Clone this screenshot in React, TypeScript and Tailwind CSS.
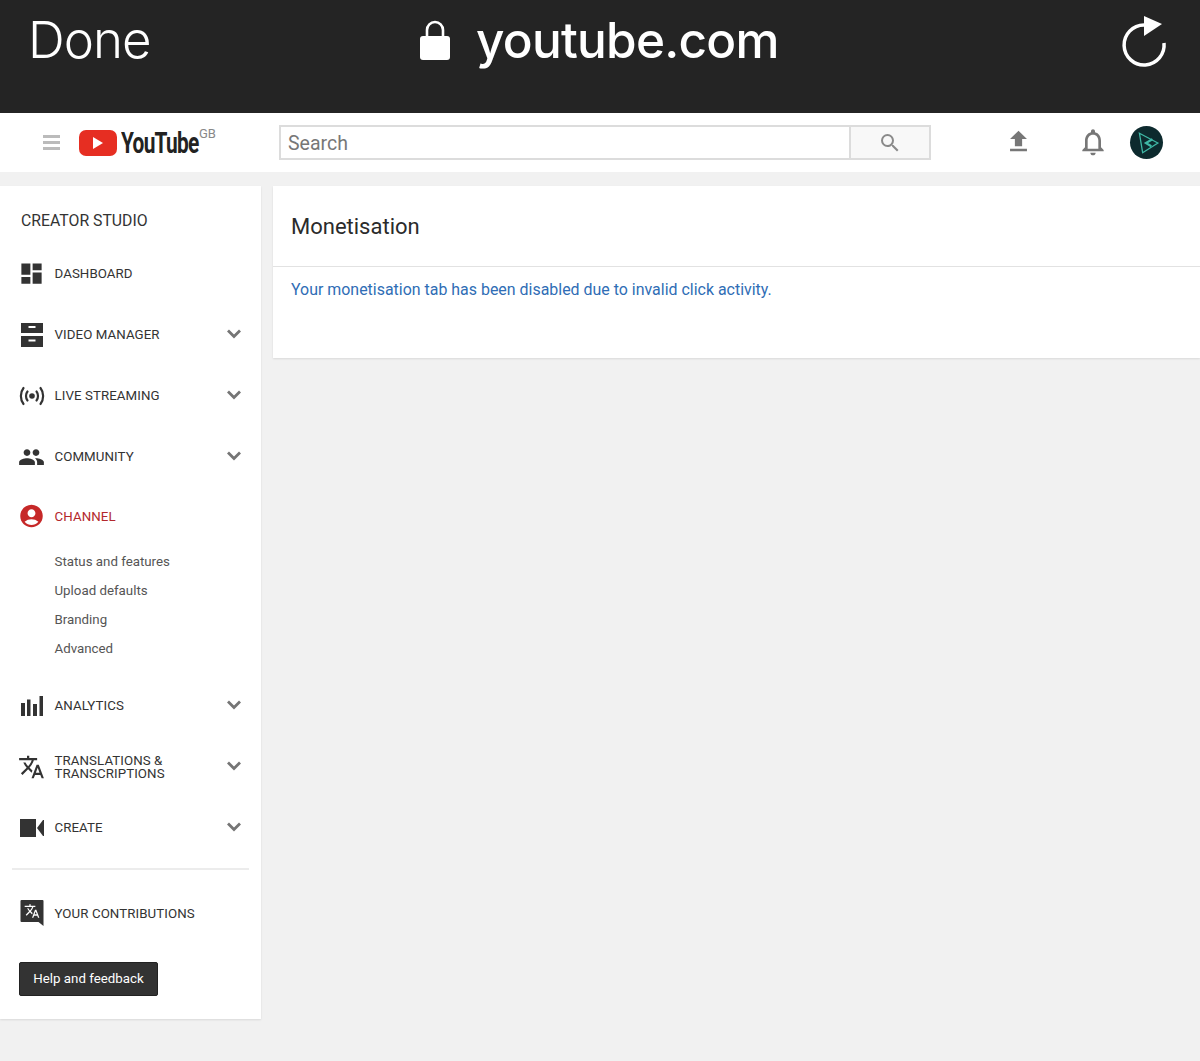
import { MdDashboard, MdPeople, MdAccountCircle, MdTranslate, MdSearch, MdFileUpload, MdNotificationsNone } from "react-icons/md";
import type { ReactNode } from "react";

function VideoManagerIcon() {
  return (
    <svg viewBox="0 0 22 24" className="w-[22px] h-[24px]" fill="#333">
      <path fillRule="evenodd" d="M0 0h22v10H0zM7.500 3v2h7V3zM0 13h22v11H0zM7.500 16.500v2h7v-2z" />
    </svg>
  );
}

function LiveIcon() {
  return (
    <svg viewBox="0 0 26 20" className="w-[26px] h-[20px]" fill="none" stroke="#333" strokeWidth="2.200" strokeLinecap="round">
      <circle cx="13" cy="10" r="2.800" fill="#333" stroke="none" />
      <path d="M8.500 5.500C6.500 8 6.500 12 8.500 14.500M17.500 5.500c2 2.500 2 6.500 0 9M4.500 2C1 6.500 1 13.500 4.500 18M21.500 2c3.500 4.500 3.500 11.500 0 16" />
    </svg>
  );
}

function AnalyticsIcon() {
  return (
    <svg viewBox="0 0 23 20" className="w-[23px] h-[20px]" fill="#333">
      <path d="M1 7h4v13H1zM7 3.500h3.500V20H7zM13 8h4v12h-4zM19.500 0H23v20h-3.500z" />
    </svg>
  );
}

function CameraIcon() {
  return (
    <svg viewBox="0 0 24 18" className="w-[24px] h-[18px]" fill="#333">
      <path d="M0 0h16v18H0zM17 9l6-8h1v16h-1z" />
    </svg>
  );
}

function ContributionsIcon() {
  return (
    <div className="relative w-[24px] h-[26px]">
      <svg viewBox="0 0 24 26" className="w-[24px] h-[26px]" fill="#333">
        <path d="M1.500 0h21a1 1 0 0 1 1 1v25l-5-4H1.500a1 1 0 0 1-1-1V1a1 1 0 0 1 1-1z" />
      </svg>
      <MdTranslate className="absolute left-[4px] top-[3px] w-[16px] h-[16px] text-white" />
    </div>
  );
}

function Chevron() {
  return (
    <svg viewBox="0 0 14 10" className="w-[14px] h-[10px] mb-[2px]" fill="none" stroke="#757575" strokeWidth="2.800">
      <path d="M1 1.500l6 6 6-6" />
    </svg>
  );
}

type NavItem = {
  label: ReactNode;
  icon: ReactNode;
  arrow?: boolean;
};

const topItems: NavItem[] = [
  { label: "DASHBOARD", icon: <MdDashboard className="w-[29px] h-[29px] text-[#333]" /> },
  { label: "VIDEO MANAGER", icon: <VideoManagerIcon />, arrow: true },
  { label: "LIVE STREAMING", icon: <LiveIcon />, arrow: true },
  { label: "COMMUNITY", icon: <MdPeople className="w-[28px] h-[28px] text-[#333]" />, arrow: true },
];

const bottomItems: NavItem[] = [
  { label: "ANALYTICS", icon: <AnalyticsIcon />, arrow: true },
  {
    label: (
      <>
        TRANSLATIONS &amp;
        <br />
        TRANSCRIPTIONS
      </>
    ),
    icon: <MdTranslate className="w-[28px] h-[28px] text-[#333]" />,
    arrow: true,
  },
  { label: "CREATE", icon: <CameraIcon />, arrow: true },
];

const channelLinks = ["Status and features", "Upload defaults", "Branding", "Advanced"];

function NavRow({ item }: { item: NavItem }) {
  return (
    <div className="h-[61px] flex items-center pl-[18px] pr-[20px]">
      <div className="w-[27px] flex justify-center">{item.icon}</div>
      <div className="ml-[9.500px] pt-[2px] flex-1 text-[13.300px] leading-[12.500px] tracking-[0.07px] text-[#333]">{item.label}</div>
      {item.arrow && <Chevron />}
    </div>
  );
}

export default function App() {
  return (
    <div className="w-[1200px] h-[1061px] overflow-hidden bg-[#f1f1f1] font-['Roboto',sans-serif]">
      {/* Browser bar */}
      <div className="h-[113px] bg-[#242424] flex items-start pl-[28px] pr-[33px] pt-[9px] text-white">
        <span className="w-[392px] text-[51px] leading-[62px] font-['Inter',sans-serif] font-light tracking-[-1px]">Done</span>
        <svg viewBox="0 0 30 40" className="w-[30px] h-[40px] mt-[11px]" fill="none">
          <path d="M7 18v-8a8 8 0 0 1 16 0v8" stroke="#fff" strokeWidth="2.600" />
          <rect x="0" y="16" width="30" height="24" rx="3" fill="#fff" />
        </svg>
        <span className="ml-[26px] text-[49.500px] leading-[62px] font-medium font-['Inter',sans-serif] tracking-[-0.75px]">youtube.com</span>
        <svg viewBox="0 0 46 54" className="ml-auto w-[46px] h-[54px] mt-[6px]" fill="none" stroke="#fff" strokeWidth="3.500">
          <path d="M23 10A20 20 0 1 0 43 28" />
          <path d="M23 1l18 8-18 12z" fill="#fff" stroke="none" />
        </svg>
      </div>

      {/* YouTube header */}
      <div className="h-[59px] bg-white flex items-center relative">
        <div className="ml-[43px] w-[17px] flex flex-col gap-[3px]">
          <div className="h-[3px] bg-[#bbb]" />
          <div className="h-[3px] bg-[#bbb]" />
          <div className="h-[3px] bg-[#bbb]" />
        </div>
        <div className="ml-[19px] w-[38px] h-[26px] bg-[#e62e22] rounded-[7px] flex items-center justify-center">
          <div className="w-0 h-0 border-y-[6px] border-y-transparent border-l-[10px] border-l-white" />
        </div>
        <div className="w-[80px] ml-[4px]">
          <span className="block origin-left scale-x-[0.695] text-[30px] leading-[30px] font-bold tracking-[-1px] text-[#222] whitespace-nowrap">
            YouTube
          </span>
        </div>
        <span className="absolute left-[199px] top-[14px] text-[13px] leading-[14px] text-[#888]">GB</span>
        <div className="ml-[78px] w-[652px] h-[35px] flex">
          <div className="flex-1 border-2 border-[#dcdcdc] pl-[7px] pt-[2px] flex items-center text-[19.500px] text-[#777]">Search</div>
          <div className="w-[80px] border-2 border-l-0 border-[#dcdcdc] bg-[#f8f8f8] flex items-center justify-center">
            <MdSearch className="w-[24px] h-[24px] text-[#8a8a8a]" />
          </div>
        </div>
        <MdFileUpload className="absolute left-[1004px] top-[14px] w-[29px] h-[29px] text-[#777]" />
        <MdNotificationsNone className="absolute left-[1077px] top-[13px] w-[32px] h-[32px] text-[#777]" />
        <div className="absolute left-[1130px] top-[13px] w-[33px] h-[33px] rounded-full bg-[#0d2a2e] flex items-center justify-center">
          <svg viewBox="0 0 24 24" className="w-[26px] h-[26px]" fill="none" stroke="#3fb8a6" strokeWidth="1.200">
            <path d="M5 3l17 9-14 9z" />
            <path d="M17 8.500l-6 3.500 5 3" strokeWidth="2" />
          </svg>
        </div>
      </div>

      {/* Body */}
      <div className="mt-[14px] flex items-start gap-[12px]">
        <aside className="w-[261px] h-[833px] bg-white shadow-[0_1px_2px_rgba(0,0,0,0.1)]">
          <div className="pl-[21px] pt-[25px] text-[15.800px] leading-[20px] text-[#333]">CREATOR STUDIO</div>
          <div className="mt-[12px]">
            {topItems.map((item, i) => (
              <NavRow key={i} item={item} />
            ))}
          </div>
          <div className="h-[58px] flex items-center pl-[18px]">
            <div className="w-[27px] flex justify-center">
              <MdAccountCircle className="w-[30px] h-[30px] text-[#c62828]" />
            </div>
            <div className="ml-[9.500px] pt-[2px] text-[13.300px] tracking-[0.07px] text-[#b3282d]">CHANNEL</div>
          </div>
          <div className="pl-[54.500px] pt-[2px] pb-[12px]">
            {channelLinks.map((l) => (
              <div key={l} className="h-[29px] flex items-center text-[13.300px] text-[#555]">
                {l}
              </div>
            ))}
          </div>
          {bottomItems.map((item, i) => (
            <NavRow key={i} item={item} />
          ))}
          <div className="mx-[12px] mt-[10px] border-t-2 border-[#ececec]" />
          <div className="h-[86px] flex items-center pl-[18px]">
            <div className="w-[27px] flex justify-center">
              <ContributionsIcon />
            </div>
            <div className="ml-[9.500px] pt-[2px] text-[13.300px] tracking-[0.07px] text-[#333]">YOUR CONTRIBUTIONS</div>
          </div>
          <div className="ml-[19px] mt-[6px] w-[139px] h-[34px] rounded-[2px] bg-[#333] border border-[#222] flex items-center justify-center text-[13.300px] text-white">
            Help and feedback
          </div>
        </aside>

        <main className="flex-1 h-[172px] bg-white shadow-[0_1px_2px_rgba(0,0,0,0.1)]">
          <div className="h-[81px] border-b border-[#e2e2e2] pl-[18px] flex items-center text-[22px] text-[#2b2b2b]">
            Monetisation
          </div>
          <div className="pl-[18px] pt-[12px] text-[15.950px] leading-[22px] text-[#2f6db5]">
            Your monetisation tab has been disabled due to invalid click activity.
          </div>
        </main>
      </div>
    </div>
  );
}
